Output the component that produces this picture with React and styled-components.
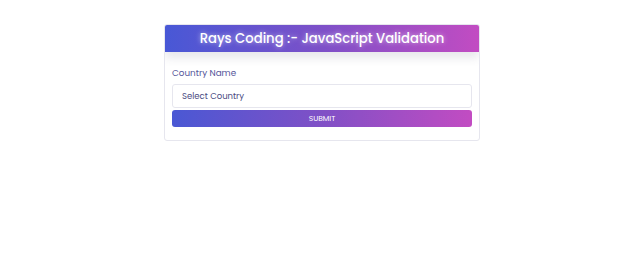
import React from 'react'
import styled, { createGlobalStyle } from 'styled-components'

const GlobalStyle = createGlobalStyle`
  * { box-sizing: border-box; }
  body {
    margin: 0;
    background: #ffffff;
    font-family: "Poppins", "Inter", "Noto Sans", sans-serif;
  }
`

const Page = styled.div`
  width: 640px;
  height: 280px;
  padding-top: 24px;
  display: flex;
  justify-content: center;
  align-items: flex-start;
`

const Card = styled.div`
  width: 316px;
  margin-left: 4px;
  border: 1px solid #e6e6ee;
  border-radius: 3px;
  background: #fff;
  overflow: hidden;
`

const Header = styled.div`
  height: 27px;
  display: flex;
  align-items: center;
  justify-content: center;
  background: linear-gradient(90deg, #4858d6 0%, #7d50c8 50%, #c24cc2 100%);
  box-shadow: 0 6px 10px rgba(60, 60, 90, 0.12);
`

const Title = styled.h1`
  margin: 0;
  color: #fff;
  font-size: 13.2px;
  font-weight: 500;
  text-shadow: 0 0 5px rgba(255, 255, 255, 0.6);
`

const Form = styled.form`
  padding: 15px 7px 13px 7px;
  display: flex;
  flex-direction: column;
`

const Label = styled.label`
  color: #55559a;
  font-size: 8.8px;
  margin-bottom: 4px;
`

const Select = styled.div`
  height: 24px;
  border: 1px solid #e6e6ee;
  border-radius: 3px;
  display: flex;
  align-items: center;
  padding-left: 9px;
  color: #4a4a82;
  font-size: 8.5px;
  margin-bottom: 2px;
`

const Button = styled.button`
  height: 17px;
  border: none;
  border-radius: 3px;
  background: linear-gradient(90deg, #4a58d4 0%, #8050c6 50%, #c24cc2 100%);
  color: #fff;
  font-family: inherit;
  font-size: 7.5px;
  padding: 0;
  cursor: pointer;
`

export default function App() {
  return (
    <>
      <GlobalStyle />
      <Page>
        <Card>
          <Header>
            <Title>Rays Coding :- JavaScript Validation</Title>
          </Header>
          <Form>
            <Label>Country Name</Label>
            <Select>Select Country</Select>
            <Button type="button">SUBMIT</Button>
          </Form>
        </Card>
      </Page>
    </>
  )
}
